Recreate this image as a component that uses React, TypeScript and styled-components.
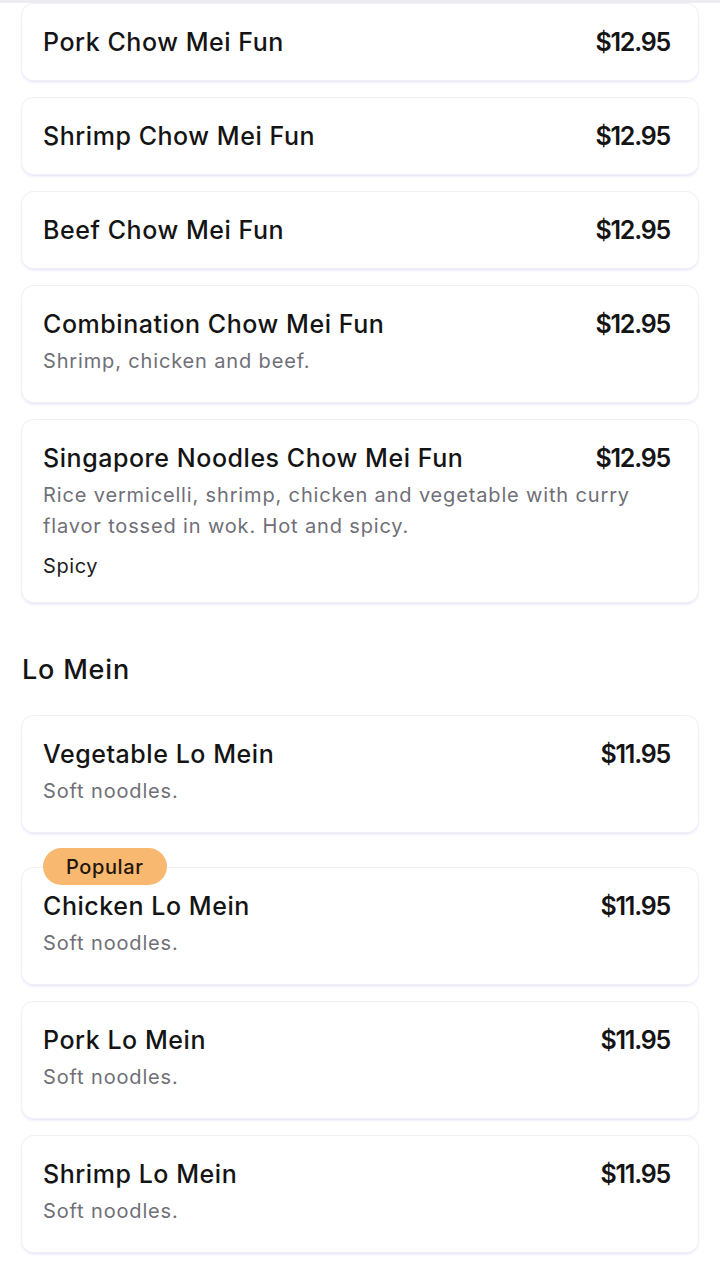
import React from 'react';
import styled, { createGlobalStyle } from 'styled-components';

const GlobalStyle = createGlobalStyle`
  body {
    margin: 0;
    background: #ffffff;
    font-family: Inter, "Noto Sans", sans-serif;
    color: #141414;
  }
`;

const TopEdge = styled.div`
  height: 3px;
  background: #ececf2;
`;

const Page = styled.div`
  padding: 1px 22px 20px;
`;

const List = styled.div`
  display: flex;
  flex-direction: column;
  gap: 18px;
`;

const SectionTitle = styled.h2`
  margin: 52px 0 30px;
  font-size: 27px;
  line-height: 32px;
  font-weight: 500;
  letter-spacing: 0.8px;
`;

const Card = styled.div<{ $badge?: boolean }>`
  position: relative;
  background: #fff;
  border-radius: 12px;
  padding: 24px 28px 24px 21px;
  margin-top: ${p => (p.$badge ? '18px' : '0')};
  box-shadow: 0 0 0 1px #f1f1f5, 0 2px 3px rgba(112, 100, 220, 0.2);
`;

const Badge = styled.span`
  position: absolute;
  left: 21px;
  top: -20px;
  height: 37px;
  padding: 0 23px;
  display: flex;
  align-items: center;
  border-radius: 19px;
  background: #f8b870;
  color: #24160a;
  font-size: 20px;
  font-weight: 500;
  letter-spacing: 0.6px;
`;

const Row = styled.div`
  display: flex;
  justify-content: space-between;
  align-items: baseline;
  gap: 16px;
`;

const Name = styled.div`
  font-size: 25px;
  line-height: 28px;
  font-weight: 500;
  letter-spacing: 0.55px;
`;

const Price = styled.div`
  font-size: 25px;
  line-height: 28px;
  font-weight: 600;
  letter-spacing: -1.2px;
`;

const Desc = styled.div`
  margin: 8px 0 1px;
  font-size: 20px;
  line-height: 31px;
  color: #6f6f78;
  letter-spacing: 0.85px;
`;

const Tag = styled.div`
  margin-top: 12px;
  font-size: 20px;
  line-height: 24px;
  color: #1c1c1c;
  letter-spacing: 0.6px;
`;

type Item = {
  name: string;
  price: string;
  desc?: string;
  tag?: string;
  popular?: boolean;
};

const chowMeiFun: Item[] = [
  { name: 'Pork Chow Mei Fun', price: '$12.95' },
  { name: 'Shrimp Chow Mei Fun', price: '$12.95' },
  { name: 'Beef Chow Mei Fun', price: '$12.95' },
  { name: 'Combination Chow Mei Fun', price: '$12.95', desc: 'Shrimp, chicken and beef.' },
  {
    name: 'Singapore Noodles Chow Mei Fun',
    price: '$12.95',
    desc: 'Rice vermicelli, shrimp, chicken and vegetable with curry flavor tossed in wok. Hot and spicy.',
    tag: 'Spicy',
  },
];

const loMein: Item[] = [
  { name: 'Vegetable Lo Mein', price: '$11.95', desc: 'Soft noodles.' },
  { name: 'Chicken Lo Mein', price: '$11.95', desc: 'Soft noodles.', popular: true },
  { name: 'Pork Lo Mein', price: '$11.95', desc: 'Soft noodles.' },
  { name: 'Shrimp Lo Mein', price: '$11.95', desc: 'Soft noodles.' },
];

const MenuCard: React.FC<{ item: Item }> = ({ item }) => (
  <Card $badge={item.popular}>
    {item.popular && <Badge>Popular</Badge>}
    <Row>
      <Name>{item.name}</Name>
      <Price>{item.price}</Price>
    </Row>
    {item.desc && <Desc>{item.desc}</Desc>}
    {item.tag && <Tag>{item.tag}</Tag>}
  </Card>
);

const App: React.FC = () => (
  <>
    <GlobalStyle />
    <TopEdge />
    <Page>
      <List>
        {chowMeiFun.map(i => (
          <MenuCard key={i.name} item={i} />
        ))}
      </List>
      <SectionTitle>Lo Mein</SectionTitle>
      <List>
        {loMein.map(i => (
          <MenuCard key={i.name} item={i} />
        ))}
      </List>
    </Page>
  </>
);

export default App;
